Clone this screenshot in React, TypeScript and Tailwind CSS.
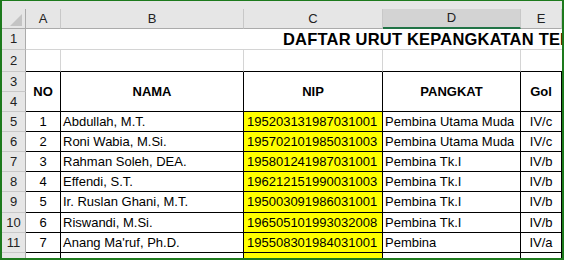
import React from "react";

const data: [string, string, string, string, string][] = [
  ["1", "Abdullah, M.T.", "195203131987031001", "Pembina Utama Muda", "IV/c"],
  ["2", "Roni Wabia, M.Si.", "195702101985031003", "Pembina Utama Muda", "IV/c"],
  ["3", "Rahman Soleh, DEA.", "195801241987031001", "Pembina Tk.I", "IV/b"],
  ["4", "Effendi, S.T.", "196212151990031003", "Pembina Tk.I", "IV/b"],
  ["5", "Ir. Ruslan Ghani, M.T.", "195003091986031001", "Pembina Tk.I", "IV/b"],
  ["6", "Riswandi, M.Si.", "196505101993032008", "Pembina Tk.I", "IV/b"],
  ["7", "Anang Ma'ruf, Ph.D.", "195508301984031001", "Pembina", "IV/a"],
  ["8", "", "195803201980031009", "Pembina", "IV/a"],
];

const rowHead =
  "bg-[#e6e6e6] border-r border-b border-r-[#ababab] border-b-[#c8c8c8] flex items-center justify-center text-[#222] text-[13px]";
const colHead =
  "bg-[#e6e6e6] border-r border-b border-r-[#c8c8c8] border-b-[#ababab] flex items-center justify-center text-[#222] text-[13px]";
const cellBlack = "border-r border-b border-black flex items-center text-black text-[13px] whitespace-nowrap overflow-hidden";

export default function App() {
  return (
    <div className="w-[564px] h-[260px] overflow-hidden bg-white border-[#1d7a1d] border-l-2 border-r-2 border-b-2 border-t font-['Liberation_Sans',Arial,sans-serif] flex flex-col">
      <div className="h-[8px] shrink-0 bg-[#e6e6e6]" />
      <div className="grid grid-cols-[24px_35px_183px_139px_138px_1fr] grid-rows-[20px_21px_22px_20px_20px_20px_20px_20px_20px_21px_20px_20px_20px] overflow-hidden">
        {/* column header row */}
        <div className="bg-[#e6e6e6] border-r border-b border-r-[#ababab] border-b-[#ababab] flex items-end justify-end pr-[3px] pb-[2px]">
          <svg width="12" height="12" viewBox="0 0 12 12">
            <polygon points="12,0 12,12 0,12" fill="#c4c4c4" />
          </svg>
        </div>
        <div className={colHead}>A</div>
        <div className={colHead}>B</div>
        <div className={colHead}>C</div>
        <div className="bg-[#d3d3d3] border-r border-r-[#c8c8c8] border-b-2 border-b-[#217346] flex items-center justify-center text-[#222] text-[13px]">
          D
        </div>
        <div className={colHead}>E</div>

        {/* row 1 */}
        <div className={rowHead}>1</div>
        <div className="col-span-5 border-b border-[#d4d4d4] flex items-center overflow-hidden whitespace-nowrap pl-[257px] text-[16.5px] tracking-[0.2px] font-bold text-black">
          DAFTAR URUT KEPANGKATAN TENAGA PENGAJAR
        </div>

        {/* row 2 */}
        <div className={rowHead}>2</div>
        <div className="border-r border-r-[#d4d4d4] border-b border-b-black" />
        <div className="border-r border-r-[#d4d4d4] border-b border-b-black" />
        <div className="border-r border-r-[#d4d4d4] border-b border-b-black" />
        <div className="border-r border-r-[#d4d4d4] border-b border-b-black" />
        <div className="border-b border-b-black" />

        {/* rows 3-4 header */}
        <div className="col-start-1 row-start-4 bg-[#e6e6e6] border-r border-b border-r-[#ababab] border-b-[#c8c8c8] flex items-center justify-center text-[#222] text-[13px]">
          3
        </div>
        <div className="col-start-1 row-start-5 bg-[#e6e6e6] border-r border-b border-r-[#ababab] border-b-[#c8c8c8] flex items-center justify-center text-[#222] text-[13px]">
          4
        </div>
        <div className={`col-start-2 row-start-4 row-span-2 justify-center font-bold ${cellBlack}`}>NO</div>
        <div className={`col-start-3 row-start-4 row-span-2 justify-center font-bold ${cellBlack}`}>NAMA</div>
        <div className={`col-start-4 row-start-4 row-span-2 justify-center font-bold ${cellBlack}`}>NIP</div>
        <div className={`col-start-5 row-start-4 row-span-2 justify-center font-bold ${cellBlack}`}>PANGKAT</div>
        <div className={`col-start-6 row-start-4 row-span-2 justify-center font-bold ${cellBlack}`}>Gol</div>

        {data.map((r, i) => (
          <React.Fragment key={i}>
            <div className={rowHead}>{i + 5}</div>
            <div className={`justify-center ${cellBlack}`}>{r[0]}</div>
            <div className={`pl-[2px] ${cellBlack}`}>{r[1]}</div>
            <div className={`pl-[3px] bg-[#ffff00] ${cellBlack}`}>{r[2]}</div>
            <div className={`pl-[2px] ${cellBlack}`}>{r[3]}</div>
            <div className={`justify-center ${cellBlack}`}>{r[4]}</div>
          </React.Fragment>
        ))}
      </div>
    </div>
  );
}
